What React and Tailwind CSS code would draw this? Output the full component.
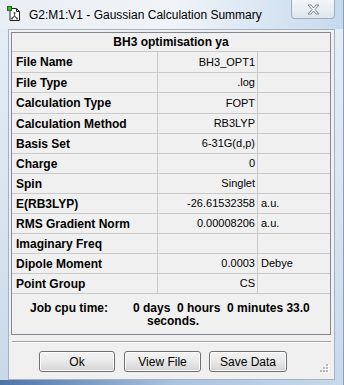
import React from "react";

const rows = [
  { label: "File Name", value: "BH3_OPT1", unit: "", h: "h-[21px]" },
  { label: "File Type", value: ".log", unit: "", h: "h-[20px]" },
  { label: "Calculation Type", value: "FOPT", unit: "", h: "h-[21px]" },
  { label: "Calculation Method", value: "RB3LYP", unit: "", h: "h-[20px]" },
  { label: "Basis Set", value: "6-31G(d,p)", unit: "", h: "h-[20px]" },
  { label: "Charge", value: "0", unit: "", h: "h-[20px]" },
  { label: "Spin", value: "Singlet", unit: "", h: "h-[20px]" },
  { label: "E(RB3LYP)", value: "-26.61532358", unit: "a.u.", h: "h-[20px]" },
  { label: "RMS Gradient Norm", value: "0.00008206", unit: "a.u.", h: "h-[20px]" },
  { label: "Imaginary Freq", value: "", unit: "", h: "h-[20px]" },
  { label: "Dipole Moment", value: "0.0003", unit: "Debye", h: "h-[20px]" },
  { label: "Point Group", value: "CS", unit: "", h: "h-[20px]" },
];

const AppIcon = () => (
  <svg width="14" height="15" viewBox="0 0 14 15">
    <path d="M3 2.5h6.5l3 3v9h-9.5z" fill="#ffffff" stroke="#222" strokeWidth="1" />
    <path d="M9.5 2.5v3h3" fill="none" stroke="#222" strokeWidth="1" />
    <rect x="0.5" y="0.5" width="4" height="4" fill="#2fc12f" stroke="#1d6e1d" strokeWidth="1" />
    <path d="M7.5 7v3M7.5 10l-2.5 2.5M7.5 10l2.5 2.5" stroke="#666" strokeWidth="1.2" fill="none" />
    <circle cx="7.5" cy="7" r="1" fill="#444" />
    <circle cx="5" cy="12.5" r="1" fill="#444" />
    <circle cx="10" cy="12.5" r="1" fill="#444" />
  </svg>
);

const CloseGlyph = () => (
  <svg width="13" height="11" viewBox="0 0 13 11">
    <path
      d="M1 1h3l2.5 3 2.5-3h3l-4 4.5 4 4.5h-3l-2.5-3-2.5 3h-3l4-4.5z"
      fill="#ffffff"
      stroke="#7c8794"
      strokeWidth="1"
      strokeLinejoin="round"
    />
  </svg>
);

const Grip = () => (
  <svg width="10" height="10" viewBox="0 0 10 10">
    {[
      [7, 1],
      [7, 4],
      [4, 4],
      [7, 7],
      [4, 7],
      [1, 7],
    ].map(([x, y], i) => (
      <g key={i}>
        <rect x={x + 1} y={y + 1} width="2" height="2" fill="#ffffff" />
        <rect x={x} y={y} width="2" height="2" fill="#b8b8b8" />
      </g>
    ))}
  </svg>
);

const Boton = ({ children, w }) => (
  <button
    className={`${w} h-[21px] rounded-[3px] border border-[#707070] bg-gradient-to-b from-[#f2f2f2] via-[#e9e9e9] to-[#d4d4d4] text-[12px] text-black leading-none shadow-[inset_0_0_0_1px_#fcfcfc]`}
  >
    {children}
  </button>
);

export default function App() {
  return (
    <div
      className="w-[344px] h-[385px] flex flex-col bg-gradient-to-b from-[#e6edf5] via-[#dbe5f0] to-[#c9d8ea] border-r border-[#8ba0b8] overflow-hidden"
      style={{ fontFamily: '"Liberation Sans", Arial, sans-serif' }}
    >
      {/* Barra de título */}
      <div className="h-[29px] flex items-start shrink-0 bg-gradient-to-r from-[#e9eef4] via-[#f0f4f8] to-[#c6daee]">
        <div className="pt-[6px] pl-[7px]">
          <AppIcon />
        </div>
        <span className="mt-[6px] ml-[8px] text-[12px] text-black">
          G2:M1:V1 - Gaussian Calculation Summary
        </span>
        <div className="ml-auto mr-[8px] w-[44px] h-[19px] flex items-center justify-center rounded-b-[4px] border border-t-0 border-[#a2adba] bg-gradient-to-b from-[#f3f6f9] to-[#dfe6ee]">
          <CloseGlyph />
        </div>
      </div>

      {/* Área cliente */}
      <div className="relative mx-[8px] h-[351px] bg-[#f0f0f0] border border-[#a3b2c4] flex flex-col">
        <div className="ml-[2px] mt-[2px] w-[320px] border border-[#828790] text-[11px] text-black">
          <div className="h-[19px] flex items-center justify-center font-bold text-[12px] border-b border-[#c9c9c9]">
            BH3 optimisation ya
          </div>
          {rows.map((r) => (
            <div
              key={r.label}
              className={`${r.h} grid grid-cols-[146px_100px_1fr] border-b border-[#c9c9c9]`}
            >
              <div className="pl-[4px] flex items-center font-bold text-[12px] border-r border-[#c9c9c9]">
                {r.label}
              </div>
              <div className="pr-[2px] flex items-center justify-end border-r border-[#c9c9c9]">
                {r.value}
              </div>
              <div className="pl-[3px] flex items-center">{r.unit}</div>
            </div>
          ))}
          <div className="h-[40px] flex pt-[8px] text-[12px] font-bold leading-[13px]">
            <div className="pl-[18px] w-[121px]">Job cpu time:</div>
            <div>
              <div className="whitespace-pre">0 days  0 hours  0 minutes 33.0</div>
              <div className="pl-[14px]">seconds.</div>
            </div>
          </div>
        </div>

        {/* Separador */}
        <div className="ml-[3px] mt-[6px] w-[319px] border-t border-[#a0a0a0] border-b border-b-white" />

        {/* Botones */}
        <div className="flex mt-[8px] pl-[30px]">
          <Boton w="w-[76px]">Ok</Boton>
          <div className="w-[9px]" />
          <Boton w="w-[77px]">View File</Boton>
          <div className="w-[8px]" />
          <Boton w="w-[78px]">Save Data</Boton>
        </div>

        <div className="absolute right-[5px] bottom-[6px]">
          <Grip />
        </div>
      </div>

      <div className="flex-1 bg-gradient-to-r from-[#4d74a6] via-[#a9c2de] to-[#c9d9ea]" />
    </div>
  );
}
